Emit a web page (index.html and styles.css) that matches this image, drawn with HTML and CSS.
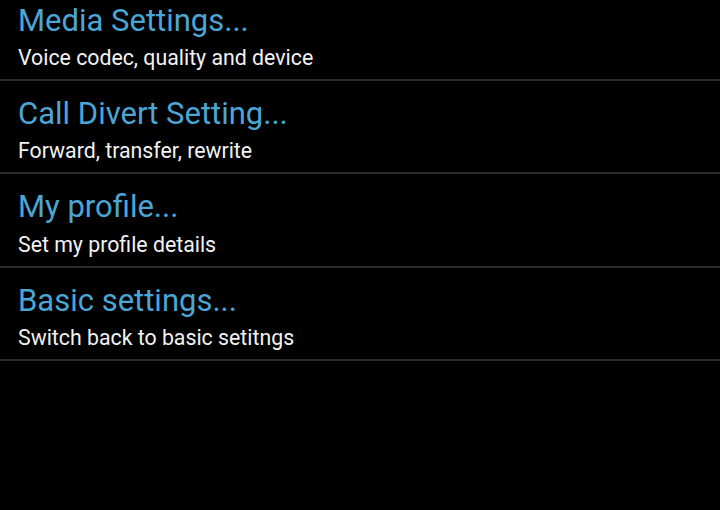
FILE: index.html
```html
<!DOCTYPE html>
<html>
<head>
<meta charset="utf-8">
<link rel="stylesheet" href="styles.css">
</head>
<body>
<ul class="list">
  <li class="item">
    <div class="title">Media Settings...</div>
    <div class="summary">Voice codec, quality and device</div>
  </li>
  <li class="item">
    <div class="title">Call Divert Setting...</div>
    <div class="summary">Forward, transfer, rewrite</div>
  </li>
  <li class="item">
    <div class="title">My profile...</div>
    <div class="summary">Set my profile details</div>
  </li>
  <li class="item">
    <div class="title">Basic settings...</div>
    <div class="summary">Switch back to basic setitngs</div>
  </li>
</ul>
</body>
</html>
```

FILE: styles.css
```css
html, body {
  margin: 0;
  padding: 0;
  background: #000;
  width: 720px;
  height: 510px;
  overflow: hidden;
  font-family: Roboto, "Noto Sans", sans-serif;
}
.list {
  list-style: none;
  margin: -12.3px 0 0 0;
  padding: 0;
}
.item {
  box-sizing: border-box;
  height: 93.33px;
  padding: 15px 18px 0;
  border-bottom: 2px solid #2a2a2a;
}
.title {
  color: #4ba6d6;
  font-size: 31px;
  line-height: 36px;
}
.summary {
  color: #f2f2f2;
  font-size: 21.3px;
  line-height: 28px;
  margin-top: 5.3px;
}
```
